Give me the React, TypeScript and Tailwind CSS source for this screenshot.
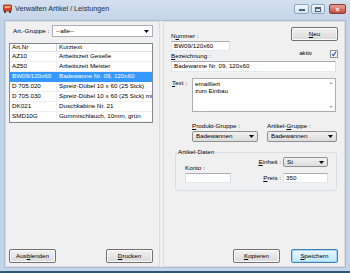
import React from 'react';

interface Artikel {
  nr: string;
  text: string;
}

const artikel: Artikel[] = [
  { nr: 'AZ10', text: 'Arbeitszeit Geselle' },
  { nr: 'AZ50', text: 'Arbeitszeit Meister' },
  { nr: 'BW09/120x60', text: 'Badewanne Nr. 09, 120x60' },
  { nr: 'D 705.020', text: 'Spreiz-Dübel 10 x 60 (25 Stck)' },
  { nr: 'D 705.030', text: 'Spreiz-Dübel 10 x 60 (25 Stck) mit Haken' },
  { nr: 'DK021', text: 'Duschkabine Nr. 21' },
  { nr: 'SMD10G', text: 'Gummischlauch, 10mm, grün' },
];

// Windows-Button mit unterstrichenem Kürzel
const WinButton: React.FC<{ text: string; u: number; focus?: boolean }> = ({ text, u, focus }) => (
  <button
    className={
      'w-[47px] h-[14px] rounded-[2px] border text-[6.25px] leading-none text-black flex items-center justify-center ' +
      (focus
        ? 'border-[#3c7fb1] bg-gradient-to-b from-[#eaf6fd] to-[#bee6fd] shadow-[inset_0_0_0_1px_#a7d9f5]'
        : 'border-[#707070] bg-gradient-to-b from-[#f2f2f2] to-[#d9d9d9] shadow-[inset_0_0_0_1px_#fcfcfc]')
    }
  >
    {text.slice(0, u)}
    <span className="underline">{text[u]}</span>
    {text.slice(u + 1)}
  </button>
);

const Arrow = () => (
  <svg width="5" height="3" viewBox="0 0 5 3" className="shrink-0">
    <polygon points="0,0 5,0 2.5,3" fill="#000" />
  </svg>
);

const ComboBox: React.FC<{ value: string; w: string; flat?: boolean }> = ({ value, w, flat }) => (
  <div
    className={
      w +
      ' flex items-center justify-between pl-[3px] pr-[3px] text-[6.25px] leading-none text-black ' +
      (flat
        ? 'border border-[#abadb3] bg-white'
        : 'border border-[#8e8f8f] rounded-[2px] bg-gradient-to-b from-[#f2f2f2] to-[#dcdcdc]')
    }
  >
    <span>{value}</span>
    <Arrow />
  </div>
);

const TextBox: React.FC<{ value?: string; w: string; h?: string }> = ({ value, w, h }) => (
  <div
    className={
      w + ' ' + (h || 'h-[10px]') +
      ' border border-[#abadb3] border-t-[#abadb3] border-l-[#e2e3ea] border-r-[#dbdfe6] border-b-[#e3e9ef] bg-white pl-[2px] flex items-center text-[6.25px] leading-none text-black'
    }
  >
    {value}
  </div>
);

const Ul: React.FC<{ text: string; u: number }> = ({ text, u }) => (
  <>
    {text.slice(0, u)}
    <span className="underline">{text[u]}</span>
    {text.slice(u + 1)}
  </>
);

export default function App() {
  return (
    <div className="w-[350px] h-[273px] flex flex-col overflow-hidden bg-[#c4d5e9] font-['Liberation_Sans',Arial,sans-serif] text-black">
      {/* Titelleiste */}
      <div className="h-[20px] shrink-0 flex items-start bg-gradient-to-b from-[#d3e0ee] to-[#c4d5e9]">
        <svg width="9" height="9" viewBox="0 0 9 9" className="ml-[3px] mt-[4px]">
          <rect x="0.5" y="1" width="8" height="6" rx="1" fill="#d8452b" stroke="#8a2a18" strokeWidth="0.8" />
          <rect x="1.5" y="2" width="6" height="2" fill="#f6a46a" />
          <rect x="1" y="7" width="2" height="2" fill="#5a3a2a" />
          <rect x="6" y="7" width="2" height="2" fill="#5a3a2a" />
        </svg>
        <span className="ml-[3px] mt-[4px] text-[7.2px] leading-[9px] text-[#1e2c3c]">Verwalten Artikel / Leistungen</span>
        <div className="ml-auto mr-[4px] mt-[4px] flex gap-[2px]">
          <div className="w-[15px] h-[10px] rounded-[2px] border border-[#8ea4bf] bg-gradient-to-b from-[#f3f7fb] to-[#d2dfee] flex items-end justify-center pb-[2px]">
            <div className="w-[6px] h-[2px] bg-[#4d5f78]" />
          </div>
          <div className="w-[14px] h-[10px] rounded-[2px] border border-[#8ea4bf] bg-gradient-to-b from-[#f3f7fb] to-[#d2dfee] flex items-center justify-center">
            <div className="w-[6px] h-[5px] border border-[#4d5f78] border-t-2" />
          </div>
          <div className="ml-[2px] w-[17px] h-[10px] rounded-[2px] border border-[#8a3a32] bg-gradient-to-b from-[#e9a198] to-[#c24a3c] flex items-center justify-center text-white text-[7px] leading-none font-bold">
            ×
          </div>
        </div>
      </div>

      {/* Fensterinhalt */}
      <div className="mx-[4px] h-[248px] shrink-0 bg-[#f0f0f0] border border-[#a9bdd3] flex gap-[3px] px-[0px] py-[0px]">
        {/* Linke Seite */}
        <div className="w-[155px] h-full border border-[#dcdcdc] flex flex-col">
          <div className="mt-[3px] pl-[7px] flex items-center">
            <span className="w-[39px] text-[6.25px] leading-none">Art.-Gruppe :</span>
            <ComboBox value="--alle--" w="w-[101px] h-[12px]" flat />
          </div>

          <div className="ml-[3px] mt-[6px] w-[144px] border border-[#828790] bg-white overflow-hidden">
            <div className="h-[8px] flex text-[6.25px] leading-none border-b border-[#e5e5e5]">
              <div className="w-[47px] pl-[2px] border-r border-[#d5d5d5] flex items-center">Art.Nr</div>
              <div className="flex-1 pl-[2px] flex items-center">Kurztext</div>
            </div>
            {artikel.map((a, i) => {
              const sel = i === 2;
              return (
                <div
                  key={a.nr}
                  className={
                    'h-[10px] flex text-[6.25px] leading-none whitespace-nowrap border-b ' +
                    (sel ? 'bg-[#3399ff] text-white border-[#3399ff]' : 'border-[#f0f0f0]')
                  }
                >
                  <div className={'w-[47px] pl-[2px] flex items-center border-r ' + (sel ? 'border-[#3399ff]' : 'border-[#f0f0f0]')}>{a.nr}</div>
                  <div className="flex-1 pl-[2px] flex items-center overflow-hidden">{a.text}</div>
                </div>
              );
            })}
          </div>

          <div className="mt-auto mb-[3px] pl-[3px] pr-[6px] flex justify-between">
            <WinButton text="Ausblenden" u={3} />
            <WinButton text="Drucken" u={0} />
          </div>
        </div>

        {/* Rechte Seite */}
        <div className="w-[182px] h-full border border-[#dcdcdc] flex flex-col text-[6.25px]">
          <div className="flex justify-between pl-[7px] pr-[6px]">
            <div className="mt-[9px] flex flex-col">
              <span className="leading-[10px]">
                <Ul text="Nummer :" u={1} />
              </span>
              <TextBox value="BW09/120x60" w="w-[59px]" />
            </div>
            <div className="mt-[5px]">
              <WinButton text="Neu" u={0} />
            </div>
          </div>

          <div className="h-[10px] flex justify-between pl-[7px] pr-[6px]">
            <span className="leading-[10px]">
              <Ul text="Bezeichnung :" u={0} />
            </span>
            <div className="flex items-center gap-[18px] -mt-[5px]">
              <span className="leading-none">aktiv</span>
              <svg width="8" height="8" viewBox="0 0 8 8">
                <rect x="0.5" y="0.5" width="7" height="7" fill="#f4f4f4" stroke="#8e8f8f" />
                <path d="M2 4 L3.3 5.6 L6 1.8" fill="none" stroke="#2b4fa8" strokeWidth="1.1" />
              </svg>
            </div>
          </div>

          <div className="pl-[7px]">
            <TextBox value="Badewanne Nr. 09, 120x60" w="w-[165px]" h="h-[11px]" />
          </div>

          <div className="mt-[6px] flex pl-[8px]">
            <span className="w-[20px] leading-[9px]">
              <Ul text="Text :" u={0} />
            </span>
            <div className="w-[144px] h-[34px] border border-[#abadb3] bg-white flex">
              <div className="flex-1 pl-[2px] pt-[1px] leading-[7px]">
                emailliert
                <br />
                zum Einbau
              </div>
              <div className="w-[8px] flex flex-col justify-between items-center py-[3px] text-[#a0a0a0]">
                <svg width="4" height="2" viewBox="0 0 4 2"><polygon points="0,2 4,2 2,0" fill="#b0b0b0" /></svg>
                <svg width="4" height="2" viewBox="0 0 4 2"><polygon points="0,0 4,0 2,2" fill="#b0b0b0" /></svg>
              </div>
            </div>
          </div>

          <div className="mt-[9px] ml-[28px] flex gap-[9px]">
            <div className="flex flex-col">
              <span className="leading-[10px]">
                <Ul text="Produkt-Gruppe :" u={0} />
              </span>
              <ComboBox value="Badewannen" w="w-[66px] h-[11px]" />
            </div>
            <div className="flex flex-col">
              <span className="leading-[10px]">
                <Ul text="Artikel-Gruppe :" u={8} />
              </span>
              <ComboBox value="Badewannen" w="w-[70px] h-[11px]" />
            </div>
          </div>

          <div className="relative mt-[10px] ml-[11px] w-[162px] border border-[#d5dfe5] rounded-[3px] flex justify-between pl-[9px] pr-[8px] pb-[7px]">
            <span className="absolute -top-[5px] left-[1px] px-[1px] bg-[#f0f0f0] leading-[8px]">Artikel-Daten</span>
            <div className="pt-[10px] flex flex-col">
              <span className="leading-[10px]">Konto :</span>
              <TextBox w="w-[46px]" />
            </div>
            <div className="pt-[4px] flex flex-col gap-[6px]">
              <div className="flex items-center">
                <span className="mr-[2px] leading-none">
                  <Ul text="Einheit :" u={0} />
                </span>
                <ComboBox value="St" w="w-[45px] h-[10px]" />
              </div>
              <div className="flex items-center justify-end">
                <span className="mr-[2px] leading-none">
                  <Ul text="Preis :" u={0} />
                </span>
                <TextBox value="350" w="w-[45px]" />
              </div>
            </div>
          </div>

          <div className="mt-auto mb-[3px] pr-[6px] flex justify-end gap-[11px]">
            <WinButton text="Kopieren" u={0} />
            <WinButton text="Speichern" u={0} focus />
          </div>
        </div>
      </div>

      <div className="h-[3px] shrink-0" />
      <div className="flex-1 bg-[#2c5a73]" />
    </div>
  );
}
